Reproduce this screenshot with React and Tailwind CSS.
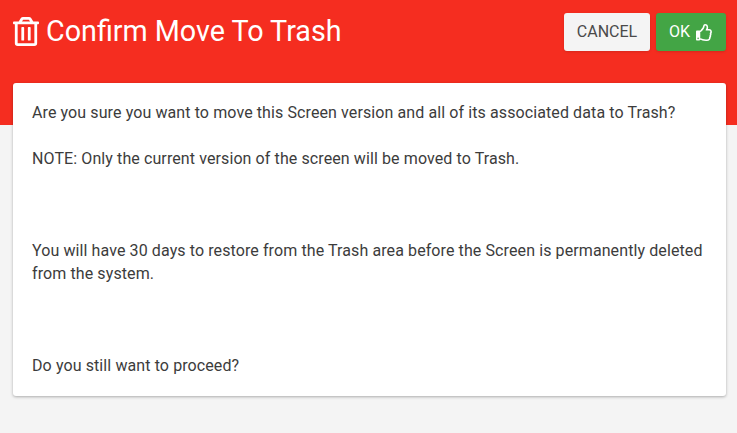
import { FaRegTrashAlt, FaRegThumbsUp } from "react-icons/fa";

const App = () => {
  return (
    <div className="min-h-[433px] bg-[#f4f4f4] font-['Roboto',sans-serif] text-[#3c3c3c]">
      {/* Header */}
      <div className="h-[125px] bg-[#f52d20] flex items-start justify-between pl-[13px] pr-[11px]">
        <div className="flex items-center gap-[7px] pt-[15px] text-white">
          <FaRegTrashAlt className="w-[26px] h-[29px] shrink-0" preserveAspectRatio="none" />
          <h1 className="text-[28.7px] leading-[32px] font-normal">Confirm Move To Trash</h1>
        </div>
        <div className="flex gap-[6px] pt-[13px]">
          <button className="h-[38px] w-[86px] rounded-[3px] bg-[#f4f4f4] text-[#4a4a4a] text-base font-normal shadow-sm">
            CANCEL
          </button>
          <button className="h-[38px] w-[70px] rounded-[3px] bg-[#43a545] text-white text-base font-normal shadow-sm flex items-center justify-center gap-[6px]">
            OK
            <FaRegThumbsUp className="w-[17px] h-[17px]" />
          </button>
        </div>
      </div>

      {/* Message */}
      <div className="ml-[13px] mr-[11px] mt-[-42px] h-[313px] relative rounded-[3px] bg-white shadow-[0_1px_3px_rgba(0,0,0,0.3)] px-[19px] pt-[19px] text-base leading-[22.88px] tracking-[0.1px]">
        <p>Are you sure you want to move this Screen version and all of its associated data to Trash?</p>
        <p className="mt-[23px]">NOTE: Only the current version of the screen will be moved to Trash.</p>
        <p className="mt-[69px]">
          You will have 30 days to restore from the Trash area before the Screen is permanently deleted from the system.
        </p>
        <p className="mt-[69px]">Do you still want to proceed?</p>
      </div>
    </div>
  );
};

export default App;
